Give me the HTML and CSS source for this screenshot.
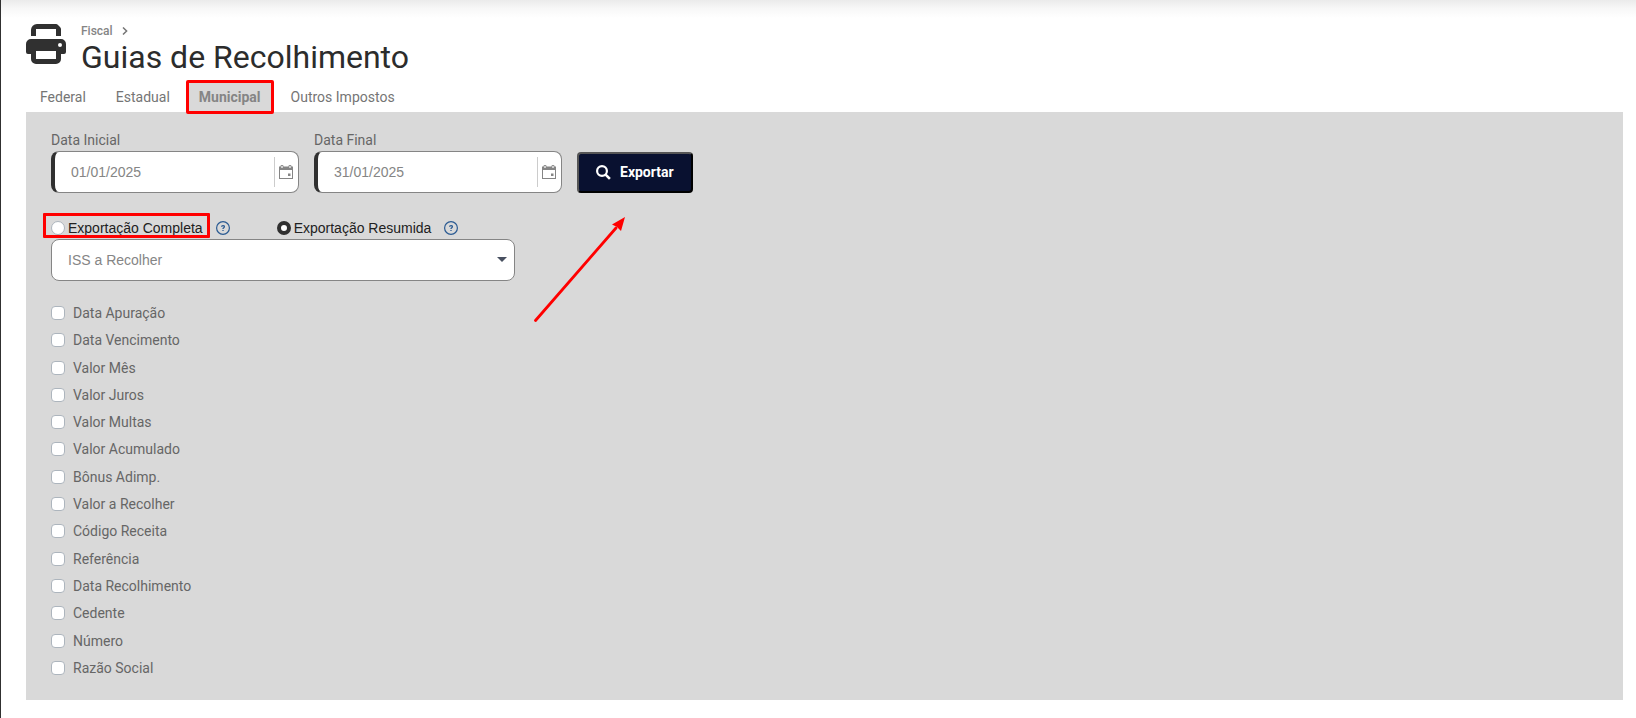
FILE: index.html
```html
<!DOCTYPE html>
<html lang="pt-BR">
<head>
<meta charset="utf-8">
<title>Guias de Recolhimento</title>
<link rel="stylesheet" href="styles.css">
</head>
<body>
<main class="page">
  <header class="page-header">
    <svg class="printer" viewBox="0 0 40 40" aria-hidden="true">
      <path fill="#303030" fill-rule="evenodd" d="M5 12V6a6 6 0 0 1 6-6h19a3 3 0 0 1 2 1l2 2a3 3 0 0 1 1 2v7h-5V5H10v7zM5 15h30a5 5 0 0 1 5 5v8a2 2 0 0 1-2 2h-3v5a5 5 0 0 1-5 5H10a5 5 0 0 1-5-5v-5H2a2 2 0 0 1-2-2v-8a5 5 0 0 1 5-5zm5 12v8h20v-8zM34 19a2 2 0 1 0 0 4a2 2 0 0 0 0-4z"/>
    </svg>
    <div class="heading">
      <nav class="breadcrumb" aria-label="Caminho">
        <a href="#">Fiscal</a>
        <svg class="chevron" viewBox="0 0 6 8" aria-hidden="true"><path d="M1 0.5L4.6 4L1 7.5" fill="none" stroke="#757575" stroke-width="1.5"/></svg>
      </nav>
      <h1 class="title">Guias de Recolhimento</h1>
    </div>
  </header>

  <nav class="tabs" aria-label="Esferas">
    <a class="tab" href="#">Federal</a>
    <a class="tab" href="#">Estadual</a>
    <a class="tab tab-active" href="#" aria-current="page">Municipal</a>
    <a class="tab" href="#">Outros Impostos</a>
  </nav>

  <form class="panel">
    <div class="filters">
      <div class="field">
        <label class="field-label" for="inicio">Data Inicial</label>
        <div class="date-box">
          <input class="date-input" id="inicio" type="text" value="01/01/2025">
          <button class="date-button" type="button" aria-label="Abrir calendário">
            <svg class="calendar" viewBox="0 0 14 14"><path fill="#858585" fill-rule="evenodd" d="M0 1.5h1.5V1a1.5 1 0 0 1 3 0v.5h5V1a1.5 1 0 0 1 3 0v.5H14V14H0zM1 5v8h12V5zM2.4 1v2h1.2V1zM10.4 1v2h1.2V1zM9 8.500h2.500V11H9z"/></svg>
          </button>
        </div>
      </div>
      <div class="field">
        <label class="field-label" for="fim">Data Final</label>
        <div class="date-box">
          <input class="date-input" id="fim" type="text" value="31/01/2025">
          <button class="date-button" type="button" aria-label="Abrir calendário">
            <svg class="calendar" viewBox="0 0 14 14"><path fill="#858585" fill-rule="evenodd" d="M0 1.5h1.5V1a1.5 1 0 0 1 3 0v.5h5V1a1.5 1 0 0 1 3 0v.5H14V14H0zM1 5v8h12V5zM2.4 1v2h1.2V1zM10.4 1v2h1.2V1zM9 8.500h2.500V11H9z"/></svg>
          </button>
        </div>
      </div>
      <div class="export">
        <button class="export-button" type="button">
          <svg class="search" viewBox="0 0 15 15" aria-hidden="true"><circle cx="6" cy="6" r="4.900" fill="none" stroke="#fff" stroke-width="2.200"/><path d="M9.600 9.600L13.900 13.900" stroke="#fff" stroke-width="2.600"/></svg>
          Exportar
        </button>
        <svg class="arrow" viewBox="0 0 92 108" aria-hidden="true"><path d="M1.500 104.500L82 12" stroke="#f00" stroke-width="2.800" stroke-linecap="round"/><path d="M91 1L87 15L83 11L78 8.500z" fill="#f00"/></svg>
      </div>
    </div>

    <div class="modes">
      <div class="mode">
        <label class="choice choice-marked"><input class="radio" type="radio" name="modo">Exportação Completa</label>
        <svg class="help" viewBox="0 0 14 14" role="img" aria-label="Ajuda"><circle cx="7" cy="7" r="6.400" fill="none" stroke="#2a5a92" stroke-width="1.200"/><path d="M5.600 5.800C5.600 4.300 8.400 4.300 8.400 5.700C8.400 6.700 7 6.700 7 7.900M7 8.900V10" fill="none" stroke="#2a5a92" stroke-width="1.300"/></svg>
      </div>
      <div class="mode">
        <label class="choice"><input class="radio" type="radio" name="modo" checked>Exportação Resumida</label>
        <svg class="help" viewBox="0 0 14 14" role="img" aria-label="Ajuda"><circle cx="7" cy="7" r="6.400" fill="none" stroke="#2a5a92" stroke-width="1.200"/><path d="M5.600 5.800C5.600 4.300 8.400 4.300 8.400 5.700C8.400 6.700 7 6.700 7 7.900M7 8.900V10" fill="none" stroke="#2a5a92" stroke-width="1.300"/></svg>
      </div>
    </div>

    <div class="select-box">
      <select class="select" aria-label="Tipo de guia"><option>ISS a Recolher</option></select>
      <svg class="caret" viewBox="0 0 10 5" aria-hidden="true"><path d="M0 0h10L5 5z" fill="#485060"/></svg>
    </div>

    <div class="columns">
      <label class="column"><input class="check" type="checkbox">Data Apuração</label>
      <label class="column"><input class="check" type="checkbox">Data Vencimento</label>
      <label class="column"><input class="check" type="checkbox">Valor Mês</label>
      <label class="column"><input class="check" type="checkbox">Valor Juros</label>
      <label class="column"><input class="check" type="checkbox">Valor Multas</label>
      <label class="column"><input class="check" type="checkbox">Valor Acumulado</label>
      <label class="column"><input class="check" type="checkbox">Bônus Adimp.</label>
      <label class="column"><input class="check" type="checkbox">Valor a Recolher</label>
      <label class="column"><input class="check" type="checkbox">Código Receita</label>
      <label class="column"><input class="check" type="checkbox">Referência</label>
      <label class="column"><input class="check" type="checkbox">Data Recolhimento</label>
      <label class="column"><input class="check" type="checkbox">Cedente</label>
      <label class="column"><input class="check" type="checkbox">Número</label>
      <label class="column"><input class="check" type="checkbox">Razão Social</label>
    </div>
  </form>
</main>
</body>
</html>
```
FILE: styles.css
```css
* {
  box-sizing: border-box;
}

body {
  margin: 0;
  min-height: 100vh;
  border-left: 1px solid #303030;
  background: linear-gradient(#ebebeb, #f7f7f7 8px, #fff 18px) no-repeat #fff;
  font-family: Roboto, "Liberation Sans", sans-serif;
  font-size: 14px;
  color: #666;
}

.page {
  padding: 22px 13px 18px 25px;
}

.page-header {
  display: flex;
  gap: 15px;
}

.printer {
  width: 40px;
  height: 40px;
  margin-top: 2px;
}

.heading {
  display: flex;
  flex-direction: column;
}

.breadcrumb {
  display: flex;
  align-items: center;
  gap: 9px;
  font-size: 12px;
  font-weight: 500;
  line-height: 18px;
}

.breadcrumb a {
  color: #858585;
  text-decoration: none;
}

.chevron {
  width: 6px;
  height: 8px;
}

.title {
  margin: 0;
  font-size: 32px;
  font-weight: 400;
  line-height: 34px;
  color: #2c2c2c;
}

.tabs {
  display: flex;
  padding-top: 6px;
}

.tab {
  padding: 2px 15px 0;
  border: 3px solid transparent;
  border-width: 3px 0;
  line-height: 24px;
  color: #757575;
  text-decoration: none;
}

.tab:first-child {
  padding-left: 14px;
}

.tab-active {
  position: relative;
  margin: 0 2px -2px 1px;
  padding: 2px 10px 0;
  border: 3px solid #f00;
  border-radius: 2px;
  background: #d9d9d9;
  font-weight: 700;
  color: #858585;
}

.panel {
  padding: 18px 25px 22px;
  background: #d9d9d9;
}

.filters {
  display: flex;
  align-items: flex-end;
  gap: 15px;
}

.field {
  display: flex;
  flex-direction: column;
  gap: 1px;
  width: 248px;
}

.field-label {
  line-height: 20px;
}

.date-box {
  display: flex;
  align-items: center;
  height: 42px;
  border: 1px solid #858585;
  border-left: 4px solid #303030;
  border-radius: 8px;
  background: #fff;
}

.date-input {
  flex: 1;
  min-width: 0;
  padding: 0 16px;
  border: 0;
  background: transparent;
  font: 14px "Liberation Sans", Arial, sans-serif;
  color: #858585;
}

.date-button {
  display: flex;
  align-items: center;
  height: 30px;
  padding: 0 5px 0 4px;
  border: 0;
  border-left: 1px solid #ccc;
  background: transparent;
}

.calendar {
  width: 14px;
  height: 14px;
}

.export {
  position: relative;
}

.export-button {
  display: flex;
  align-items: center;
  gap: 9px;
  height: 41px;
  padding: 0 17px 1px;
  border: 2px solid #000;
  border-color: #555 #000 #000 #555;
  border-radius: 4px;
  background: #091130;
  font: 700 14px Roboto, sans-serif;
  color: #fff;
}

.search {
  width: 15px;
  height: 15px;
}

.arrow {
  position: absolute;
  top: 64px;
  left: -43px;
  width: 92px;
  height: 108px;
}

.modes {
  display: flex;
  gap: 47px;
  padding-top: 24px;
  font-family: "Liberation Sans", Arial, sans-serif;
  color: #212121;
}

.mode {
  display: flex;
  align-items: center;
  gap: 13px;
}

.choice {
  position: relative;
  display: flex;
  align-items: center;
  gap: 3px;
  line-height: 22px;
}

.choice-marked::after {
  content: "";
  position: absolute;
  inset: -4px -7px 1px -8px;
  border: 3px solid #f00;
  border-radius: 1px;
}

.radio {
  appearance: none;
  width: 14px;
  height: 14px;
  margin: 0;
  border: 1px solid #adb5bd;
  border-radius: 50%;
  background: #fff;
}

.radio:checked {
  border: 4px solid #303030;
}

.help {
  width: 14px;
  height: 14px;
}

.select-box {
  position: relative;
  width: 464px;
  max-width: 100%;
}

.select {
  display: block;
  appearance: none;
  width: 100%;
  height: 42px;
  padding: 0 16px;
  border: 1px solid #858585;
  border-radius: 8px;
  background: #fff;
  font: 14px "Liberation Sans", Arial, sans-serif;
  color: #858585;
}

.caret {
  position: absolute;
  top: 18px;
  right: 8px;
  width: 10px;
  height: 5px;
  pointer-events: none;
}

.columns {
  display: flex;
  flex-direction: column;
  justify-content: space-between;
  min-height: 397px;
  padding-top: 22px;
}

.column {
  display: flex;
  align-items: center;
  gap: 8px;
  line-height: 20px;
}

.check {
  appearance: none;
  width: 14px;
  height: 14px;
  margin: 0;
  border: 1px solid #adb5bd;
  border-radius: 4px;
  background: #fff;
}
```
